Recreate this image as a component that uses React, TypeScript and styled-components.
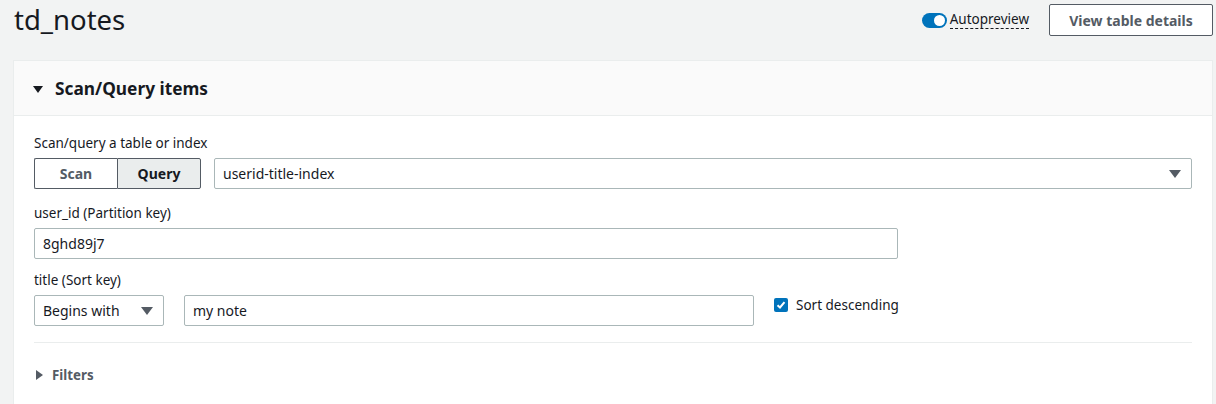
import styled, { createGlobalStyle } from "styled-components";

const GlobalStyle = createGlobalStyle`
  html, body {
    margin: 0;
    padding: 0;
    background: #f2f3f3;
    font-family: "Noto Sans", "Open Sans", sans-serif;
    color: #16191f;
  }
  * { box-sizing: border-box; }
`;

const Page = styled.div`
  width: 1216px;
  height: 404px;
  overflow: hidden;
  padding: 0 3px 0 13px;
`;

const Header = styled.div`
  display: flex;
  align-items: center;
  justify-content: space-between;
  height: 60px;
  padding-bottom: 20px;
`;

const Title = styled.h1`
  margin: 0;
  font-size: 27.5px;
  font-weight: 400;
  line-height: 36px;
  padding-left: 1px;
`;

const Actions = styled.div`
  display: flex;
  align-items: center;
  gap: 20px;
`;

const ToggleWrap = styled.label`
  display: flex;
  align-items: center;
  gap: 3px;
  font-size: 13.5px;
`;

const Toggle = styled.span`
  width: 25px;
  height: 15px;
  border-radius: 8px;
  background: #0073bb;
  position: relative;

  &::after {
    content: "";
    position: absolute;
    right: 2px;
    top: 2px;
    width: 11px;
    height: 11px;
    border-radius: 50%;
    background: #fff;
  }
`;

const Dashed = styled.span`
  border-bottom: 1px dashed #16191f;
  line-height: 17px;
`;

const OutlineButton = styled.button`
  width: 164px;
  height: 32px;
  padding: 0;
  border: 1px solid #545b64;
  border-radius: 2px;
  background: #fff;
  color: #545b64;
  font-family: inherit;
  font-size: 14px;
  font-weight: 700;
`;

const Panel = styled.section`
  background: #fff;
  border-left: 1px solid #eaeded;
  border-top: 1px solid #eaeded;
  border-right: 1px solid #eaeded;
  height: 344px;
`;

const PanelHead = styled.div`
  display: flex;
  align-items: center;
  gap: 12px;
  height: 55px;
  padding-left: 19px;
  background: #fafafa;
  border-bottom: 1px solid #eaeded;
  font-size: 17.3px;
  font-weight: 700;
`;

const PanelBody = styled.div`
  padding: 17px 20px 0 20px;
  display: flex;
  flex-direction: column;
`;

const Label = styled.div`
  font-size: 13.5px;
  line-height: 20px;
  margin-bottom: 5px;
`;

const Row = styled.div<{ $gap?: number; $after?: number }>`
  display: flex;
  align-items: center;
  gap: ${(p) => p.$gap ?? 13}px;
  margin-bottom: ${(p) => p.$after ?? 14}px;
`;

const Segmented = styled.div`
  display: flex;
  width: 167px;
  height: 31px;
`;

const Segment = styled.div<{ $active?: boolean }>`
  flex: 1;
  display: flex;
  align-items: center;
  justify-content: center;
  font-size: 14px;
  font-weight: 700;
  border: 1px solid #545b64;
  color: ${(p) => (p.$active ? "#16191f" : "#545b64")};
  background: ${(p) => (p.$active ? "#eaeded" : "#fff")};
  &:first-child {
    border-radius: 2px 0 0 2px;
    border-right: none;
  }
  &:last-child {
    border-radius: 0 2px 2px 0;
  }
`;

const Field = styled.div<{ $width?: number }>`
  height: 31px;
  display: flex;
  align-items: center;
  justify-content: space-between;
  padding: 0 8px 0 8px;
  border: 1px solid #aab7b8;
  border-radius: 2px;
  font-size: 14px;
  background: #fff;
  ${(p) => (p.$width ? `width: ${p.$width}px; flex: none;` : "flex: 1;")}
`;

const Caret = styled.span`
  width: 0;
  height: 0;
  border-left: 6px solid transparent;
  border-right: 6px solid transparent;
  border-top: 8px solid #545b64;
  margin-right: 2px;
`;

const CheckRow = styled.label`
  display: flex;
  align-items: center;
  gap: 8px;
  font-size: 13.5px;
  margin-top: -11px;
`;

const Box = styled.span`
  width: 14px;
  height: 14px;
  border-radius: 2px;
  background: #0073bb;
  display: flex;
  align-items: center;
  justify-content: center;
`;

const Divider = styled.hr`
  border: none;
  border-top: 1px solid #eaeded;
  margin: 2px 0 0 0;
  width: 1158px;
`;

const Filters = styled.div`
  display: flex;
  align-items: center;
  gap: 9px;
  height: 64px;
  padding-left: 2px;
  font-size: 13.3px;
  font-weight: 700;
  color: #545b64;
`;

const RightTri = styled.span`
  width: 0;
  height: 0;
  border-top: 5px solid transparent;
  border-bottom: 5px solid transparent;
  border-left: 7px solid #545b64;
`;

const DownTri = styled.span`
  width: 0;
  height: 0;
  border-left: 5px solid transparent;
  border-right: 5px solid transparent;
  border-top: 7px solid #16191f;
  margin-top: 3px;
`;

export default function App() {
  return (
    <Page>
      <GlobalStyle />
      <Header>
        <Title>td_notes</Title>
        <Actions>
          <ToggleWrap>
            <Toggle />
            <Dashed>Autopreview</Dashed>
          </ToggleWrap>
          <OutlineButton>View table details</OutlineButton>
        </Actions>
      </Header>
      <Panel>
        <PanelHead>
          <DownTri />
          Scan/Query items
        </PanelHead>
        <PanelBody>
          <Label>Scan/query a table or index</Label>
          <Row>
            <Segmented>
              <Segment>Scan</Segment>
              <Segment $active>Query</Segment>
            </Segmented>
            <Field>
              userid-title-index
              <Caret />
            </Field>
          </Row>
          <Label>user_id (Partition key)</Label>
          <Row $after={11}>
            <Field $width={864}>8ghd89j7</Field>
          </Row>
          <Label>title (Sort key)</Label>
          <Row $gap={20}>
            <Field $width={130}>
              Begins with
              <Caret />
            </Field>
            <Field $width={570}>my note</Field>
            <CheckRow>
              <Box>
                <svg width="10" height="10" viewBox="0 0 10 10">
                  <path d="M1.5 5.2 L4 7.5 L8.5 2.2" stroke="#fff" strokeWidth="2" fill="none" />
                </svg>
              </Box>
              Sort descending
            </CheckRow>
          </Row>
          <Divider />
          <Filters>
            <RightTri />
            Filters
          </Filters>
        </PanelBody>
      </Panel>
    </Page>
  );
}
